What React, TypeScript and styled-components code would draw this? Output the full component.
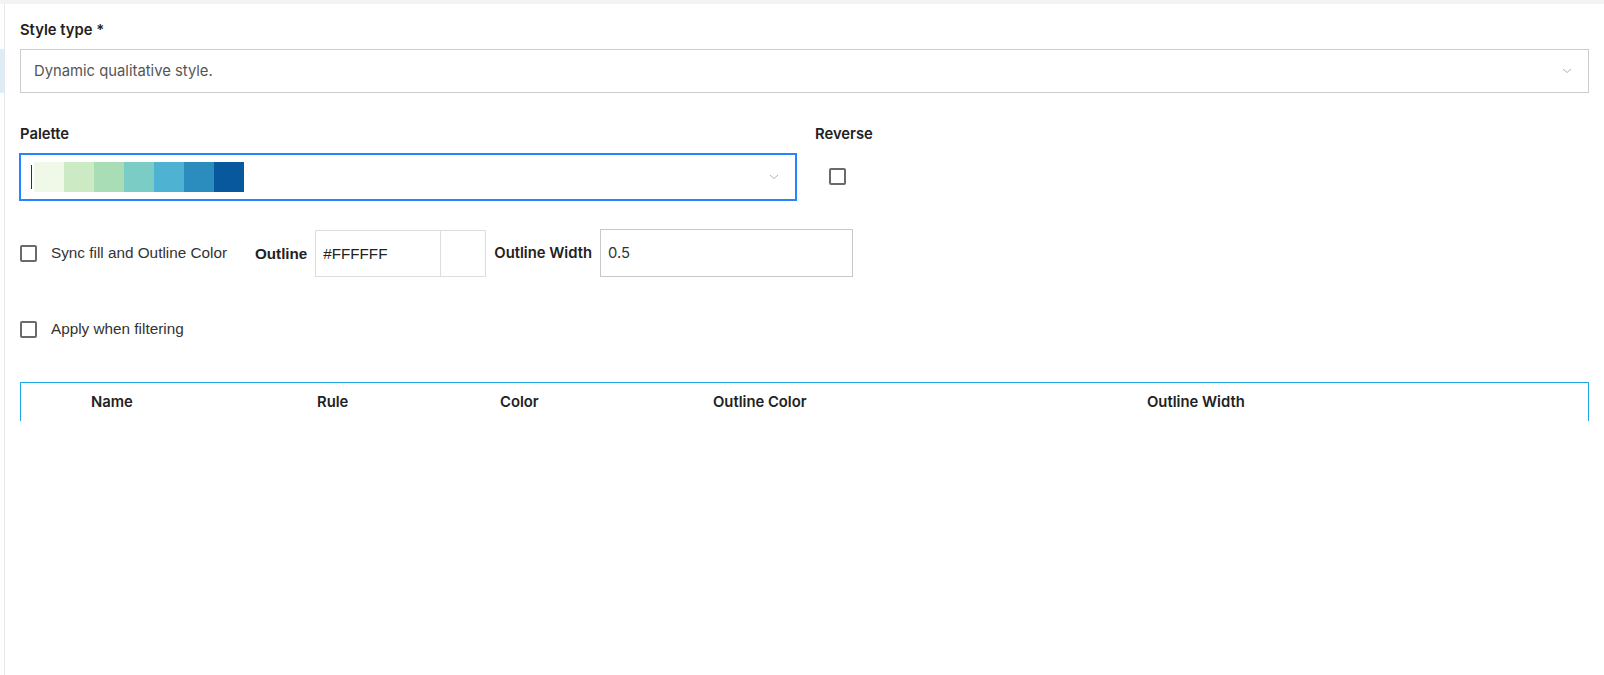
import styled, { createGlobalStyle } from "styled-components";

const GlobalStyle = createGlobalStyle`
  html, body {
    margin: 0;
    padding: 0;
    background: #ffffff;
  }
  body {
    font-family: Inter, "Noto Sans", sans-serif;
    color: #222;
  }
`;

const swatches = [
  "#f0f9e8",
  "#ccebc5",
  "#a8ddb5",
  "#7bccc4",
  "#4eb3d3",
  "#2b8cbe",
  "#08589e",
];

const columns = ["", "Name", "Rule", "Color", "Outline Color", "Outline Width"];

const Page = styled.div`
  width: 1604px;
  height: 675px;
  display: flex;
  flex-direction: column;
  overflow: hidden;
`;

const TopStrip = styled.div`
  height: 4px;
  background: #f3f3f3;
  flex-shrink: 0;
`;

const Body = styled.div`
  flex: 1;
  display: flex;
`;

const Sidebar = styled.div`
  width: 4px;
  border-right: 1px solid #e8e8e8;
  padding-top: 45px;
  flex-shrink: 0;
`;

const SidebarActive = styled.div`
  height: 44px;
  background: #dcedf8;
`;

const Main = styled.div`
  flex: 1;
  padding: 16px 15px 0 15px;
  display: flex;
  flex-direction: column;
`;

const Field = styled.div<{ width?: number }>`
  display: flex;
  flex-direction: column;
  width: ${(p) => (p.width ? `${p.width}px` : "auto")};
`;

const Label = styled.label`
  font-family: Inter, sans-serif;
  font-size: 14.8px;
  font-weight: 600;
  line-height: 20px;
  color: #222;
  margin-bottom: 9px;
`;

const Select = styled.div<{ focused?: boolean; height: number }>`
  box-sizing: border-box;
  height: ${(p) => p.height}px;
  border: 1px solid ${(p) => (p.focused ? "#2684ff" : "#cccccc")};
  box-shadow: ${(p) => (p.focused ? "0 0 0 1px #2684ff" : "none")};
  margin-top: ${(p) => (p.focused ? 1 : 0)}px;
  display: flex;
  align-items: center;
  padding-left: ${(p) => (p.focused ? 10 : 13)}px;
  padding-right: 16px;
  background: #fff;
`;

const SelectValue = styled.span`
  flex: 1;
  font-family: Inter, sans-serif;
  font-size: 14.8px;
  color: #555;
`;

const PaletteValue = styled.div`
  flex: 1;
  display: flex;
  align-items: center;
`;

const Caret = styled.span`
  width: 1px;
  height: 24px;
  background: #333;
  margin-right: 2px;
`;

const Swatch = styled.span<{ color: string }>`
  width: 30px;
  height: 30px;
  background: ${(p) => p.color};
`;

const Chevron = () => (
  <svg width="10" height="6" viewBox="0 0 10 6" fill="none">
    <path d="M1 1l4 3.5L9 1" stroke="#b3b3b3" strokeWidth="1" />
  </svg>
);

const PaletteRow = styled.div`
  display: flex;
  margin-top: 31px;
  gap: 19px;
`;

const ReverseField = styled.div`
  display: flex;
  flex-direction: column;
`;

const ReverseBox = styled.div`
  padding-left: 14px;
  height: 47px;
  display: flex;
  align-items: center;
`;

const Checkbox = styled.span`
  box-sizing: border-box;
  display: inline-block;
  width: 17px;
  height: 17px;
  border: 2px solid #6a6a6a;
  border-radius: 2px;
  background: #fff;
  flex-shrink: 0;
`;

const OptionRow = styled.div<{ top: number }>`
  display: flex;
  align-items: center;
  margin-top: ${(p) => p.top}px;
  min-height: 20px;
`;

const CheckLabel = styled.span`
  font-family: "Liberation Sans", Arial, sans-serif;
  font-size: 15.3px;
  color: #333;
  margin-left: 14px;
`;

const InlineLabel = styled.span<{ arial?: boolean; left: number }>`
  font-family: ${(p) =>
    p.arial ? `"Liberation Sans", Arial, sans-serif` : `Inter, sans-serif`};
  font-size: ${(p) => (p.arial ? 15.2 : 14.8)}px;
  font-weight: ${(p) => (p.arial ? 700 : 600)};
  color: #222;
  margin-left: ${(p) => p.left}px;
  margin-right: 8px;
`;

const ColorInput = styled.div`
  box-sizing: border-box;
  width: 171px;
  height: 47px;
  border: 1px solid #dddddd;
  display: flex;
`;

const ColorText = styled.span`
  width: 125px;
  border-right: 1px solid #dddddd;
  display: flex;
  align-items: center;
  padding-left: 7px;
  box-sizing: border-box;
  font-family: "Liberation Sans", Arial, sans-serif;
  font-size: 15.2px;
  color: #222;
`;

const ColorPreview = styled.span<{ color: string }>`
  flex: 1;
  background: ${(p) => p.color};
`;

const WidthInput = styled.div`
  box-sizing: border-box;
  width: 253px;
  height: 48px;
  border: 1px solid #c8c8c8;
  display: flex;
  align-items: center;
  padding-left: 7px;
  font-family: Inter, sans-serif;
  font-size: 14.8px;
  color: #333;
`;

const Table = styled.div`
  margin-top: 43px;
  border: 1px solid #1ea7e4;
  border-bottom: none;
  height: 38px;
  display: grid;
  grid-template-columns: 70px 226px 183px 213px 434px 1fr;
  align-items: center;
`;

const HeaderCell = styled.div`
  font-family: Inter, sans-serif;
  font-size: 14.8px;
  font-weight: 600;
  color: #222;
`;

export default function App() {
  return (
    <Page>
      <GlobalStyle />
      <TopStrip />
      <Body>
        <Sidebar>
          <SidebarActive />
        </Sidebar>
        <Main>
          <Field>
            <Label>Style type *</Label>
            <Select height={44}>
              <SelectValue>Dynamic qualitative style.</SelectValue>
              <Chevron />
            </Select>
          </Field>

          <PaletteRow>
            <Field width={776}>
              <Label>Palette</Label>
              <Select focused height={46}>
                <PaletteValue>
                  <Caret />
                  {swatches.map((c) => (
                    <Swatch key={c} color={c} />
                  ))}
                </PaletteValue>
                <Chevron />
              </Select>
            </Field>
            <ReverseField>
              <Label>Reverse</Label>
              <ReverseBox>
                <Checkbox />
              </ReverseBox>
            </ReverseField>
          </PaletteRow>

          <OptionRow top={29}>
            <Checkbox />
            <CheckLabel>Sync fill and Outline Color</CheckLabel>
            <InlineLabel arial left={28}>
              Outline
            </InlineLabel>
            <ColorInput>
              <ColorText>#FFFFFF</ColorText>
              <ColorPreview color="#FFFFFF" />
            </ColorInput>
            <InlineLabel left={8}>Outline Width</InlineLabel>
            <WidthInput>0.5</WidthInput>
          </OptionRow>

          <OptionRow top={42}>
            <Checkbox />
            <CheckLabel>Apply when filtering</CheckLabel>
          </OptionRow>

          <Table>
            {columns.map((c, i) => (
              <HeaderCell key={i}>{c}</HeaderCell>
            ))}
          </Table>
        </Main>
      </Body>
    </Page>
  );
}
